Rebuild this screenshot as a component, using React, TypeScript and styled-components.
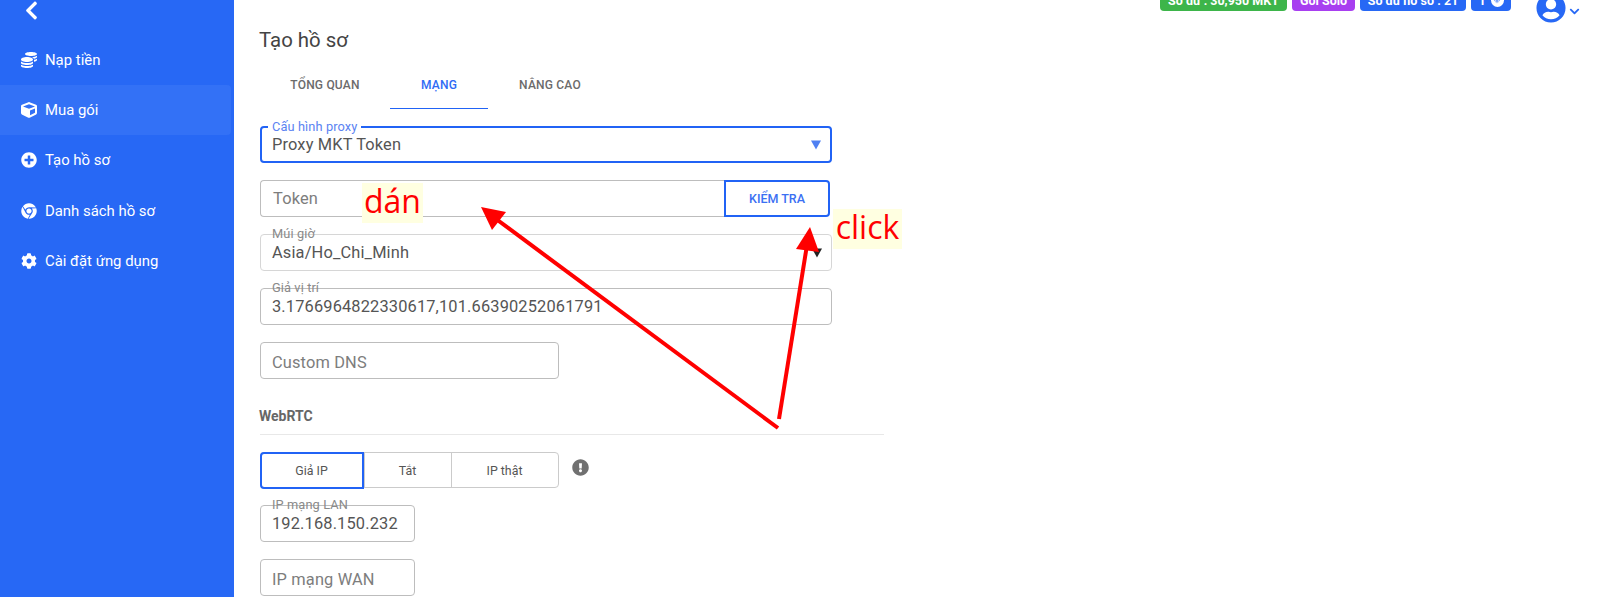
import React from "react";
import styled, { createGlobalStyle } from "styled-components";
import { FaChevronDown, FaChevronLeft, FaChrome, FaCoins, FaCog, FaCube, FaExclamationCircle, FaPlusCircle, FaUserCircle, FaGem } from "react-icons/fa";

const Global = createGlobalStyle`
  html, body { margin: 0; padding: 0; background: #fff; }
  body { font-family: Roboto, "Liberation Sans", sans-serif; color: #555; }
`;

const Page = styled.div`
  position: relative;
  display: grid;
  grid-template-columns: 234px 1fr;
  width: 1600px;
  height: 597px;
  overflow: hidden;
`;

const Sidebar = styled.aside`
  background: #2768f5;
  display: flex;
  flex-direction: column;
  height: 597px;
`;
const Back = styled.div`
  height: 20px;
  margin-bottom: 15px;
  padding-left: 21px;
  color: #fff;
  font-size: 21px;
  display: flex;
  align-items: center;
`;
const NavItem = styled.div<{ $active?: boolean }>`
  height: 50.2px;
  width: 231px;
  padding-left: 21px;
  box-sizing: border-box;
  display: flex;
  align-items: center;
  gap: 8px;
  color: #fff;
  font-size: 14.9px;
  border-radius: 0 4px 4px 0;
  background: ${(p) => (p.$active ? "#3371f6" : "transparent")};
  svg { width: 16px; height: 16px; flex: none; }
`;

const Main = styled.main`
  display: flex;
  flex-direction: column;
  margin-top: -12px;
`;
const TopBar = styled.div`
  display: flex;
  justify-content: flex-end;
  align-items: flex-start;
  height: 39px;
  padding-right: 20px;
  gap: 5px;
`;
const Badge = styled.div<{ $color: string; $w: number }>`
  background: ${(p) => p.$color};
  width: ${(p) => p.$w}px;
  height: 23px;
  padding-top: 1px;
  box-sizing: border-box;
  border-radius: 4px;
  color: #fff;
  font-size: 12.5px;
  font-weight: 700;
  display: flex;
  align-items: center;
  justify-content: center;
  gap: 5px;
  white-space: nowrap;
`;
const GemDot = styled.span`
  width: 13px;
  height: 13px;
  border-radius: 50%;
  background: #fff;
  color: #7aa2f7;
  display: inline-flex;
  align-items: center;
  justify-content: center;
  font-size: 8px;
`;
const UserMenu = styled.div`
  display: flex;
  align-items: flex-start;
  color: #2768f5;
  margin-left: 20px;
  padding-top: 5px;
  gap: 3px;
  .avatar { width: 30px; height: 30px; }
  .caret { width: 11px; height: 11px; margin-top: 13px; }
`;

const Content = styled.div`
  padding-left: 26px;
  width: 624px;
  display: flex;
  flex-direction: column;
`;
const Title = styled.h1`
  margin: 0 0 0 -1px;
  font-size: 20.4px;
  line-height: 26px;
  font-weight: 400;
  color: #444;
`;
const Tabs = styled.div`
  display: flex;
  margin-top: 8px;
  margin-bottom: 17px;
  height: 48px;
`;
const Tab = styled.div<{ $active?: boolean; $w: number }>`
  width: ${(p) => p.$w}px;
  display: flex;
  align-items: center;
  justify-content: center;
  font-size: 12px;
  font-weight: 500;
  letter-spacing: 0.2px;
  color: ${(p) => (p.$active ? "#2f6bf5" : "#6b6b6b")};
  border-bottom: ${(p) => (p.$active ? "1.5px solid #2163f5" : "1.5px solid transparent")};
  box-sizing: border-box;
`;

const Field = styled.div<{ $w?: number; $focus?: boolean; $faint?: boolean; $gap?: number }>`
  position: relative;
  box-sizing: border-box;
  width: ${(p) => p.$w ?? 572}px;
  height: 37px;
  margin-bottom: ${(p) => p.$gap ?? 17}px;
  border: ${(p) => (p.$focus ? "2px solid #2163f5" : `1px solid ${p.$faint ? "#d6d6d6" : "#bdbdbd"}`)};
  border-radius: 4px;
  padding-left: ${(p) => (p.$focus ? 10 : 11)}px;
  display: flex;
  align-items: center;
  font-size: 16.4px;
  color: #555;
  letter-spacing: 0.15px;
  background: #fff;
`;
const Floating = styled.span<{ $focus?: boolean }>`
  position: absolute;
  left: ${(p) => (p.$focus ? 6 : 11)}px;
  top: -8px;
  font-size: 12.8px;
  line-height: 14px;
  letter-spacing: 0.1px;
  color: ${(p) => (p.$focus ? "#5b83f2" : "#8a8a8a")};
  padding: 0 ${(p) => (p.$focus ? 4 : 0)}px;
  background: ${(p) => (p.$focus ? "#fff" : "transparent")};
`;
const Placeholder = styled.span<{ $low?: boolean }>`
  color: #7d7d7d;
  padding-top: ${(p) => (p.$low ? 3 : 0)}px;
`;
const Caret = styled.span<{ $color: string }>`
  position: absolute;
  right: 9px;
  top: 50%;
  transform: translateY(-50%);
  width: 0;
  height: 0;
  border-left: 5px solid transparent;
  border-right: 5px solid transparent;
  border-top: 9px solid ${(p) => p.$color};
`;
const TokenRow = styled.div`
  display: flex;
  width: 570px;
  margin-bottom: 17px;
`;
const TokenInput = styled(Field)`
  flex: 1;
  margin-bottom: 0;
  border-right: none;
  border-radius: 4px 0 0 4px;
  padding-left: 12px;
`;
const CheckButton = styled.div`
  box-sizing: border-box;
  width: 106px;
  height: 37px;
  border: 2px solid #2163f5;
  border-radius: 0 4px 4px 0;
  color: #3b70f3;
  font-size: 12.5px;
  font-weight: 500;
  display: flex;
  align-items: center;
  justify-content: center;
`;
const SectionTitle = styled.div`
  margin-top: 21px;
  height: 35px;
  width: 624px;
  border-bottom: 1px solid #e8e8e8;
  box-sizing: border-box;
  font-size: 14px;
  font-weight: 700;
  color: #666;
  line-height: 32px;
  text-indent: -1px;
`;
const ToggleRow = styled.div`
  display: flex;
  align-items: flex-start;
  gap: 13px;
  margin-top: 17px;
  margin-bottom: 17px;
  color: #707070;
  svg { width: 17px; height: 17px; margin-top: 7px; }
`;
const ToggleGroup = styled.div`
  display: flex;
  width: 299px;
  height: 36px;
  box-sizing: border-box;
  border: 1.5px solid #cbcbcb;
  border-radius: 4px;
`;
const Toggle = styled.div<{ $w: number; $on?: boolean }>`
  position: relative;
  width: ${(p) => p.$w}px;
  box-sizing: border-box;
  display: flex;
  align-items: center;
  justify-content: center;
  font-size: 12.4px;
  color: #555;
  border-left: ${(p) => (p.$on ? "none" : "1.5px solid #cbcbcb")};
  ${(p) => (p.$on ? "margin: -1.5px 0 -1.5px -1.5px; border: 2px solid #2163f5; border-radius: 4px 0 0 4px;" : "")}
`;

const Annotations = styled.svg`
  position: absolute;
  left: 0;
  top: 0;
  width: 1600px;
  height: 597px;
  pointer-events: none;
`;
const Note = styled.span<{ $x: number; $y: number; $w: number; $h: number }>`
  position: absolute;
  left: ${(p) => p.$x}px;
  top: ${(p) => p.$y}px;
  width: ${(p) => p.$w}px;
  height: ${(p) => p.$h}px;
  background: #ffffe1;
  color: #f00;
  font-family: "Open Sans", sans-serif;
  font-size: 32px;
  line-height: ${(p) => p.$h - 5}px;
  text-align: center;
`;

const nav = [
  { icon: <FaCoins />, label: "Nạp tiền" },
  { icon: <FaCube />, label: "Mua gói", active: true },
  { icon: <FaPlusCircle />, label: "Tạo hồ sơ" },
  { icon: <FaChrome />, label: "Danh sách hồ sơ" },
  { icon: <FaCog />, label: "Cài đặt ứng dụng" },
];

export default function App() {
  return (
    <Page>
      <Global />
      <Sidebar>
        <Back><FaChevronLeft /></Back>
        {nav.map((n) => (
          <NavItem key={n.label} $active={n.active}>{n.icon}{n.label}</NavItem>
        ))}
      </Sidebar>
      <Main>
        <TopBar>
          <Badge $color="#3db54a" $w={127}>Số dư : 30,950 MKT</Badge>
          <Badge $color="#a83ff0" $w={63}>Gói Solo</Badge>
          <Badge $color="#2768f5" $w={106}>Số dư hồ sơ : 21</Badge>
          <Badge $color="#2768f5" $w={40}>1<GemDot><FaGem /></GemDot></Badge>
          <UserMenu>
            <FaUserCircle className="avatar" />
            <FaChevronDown className="caret" />
          </UserMenu>
        </TopBar>
        <Content>
          <Title>Tạo hồ sơ</Title>
          <Tabs>
            <Tab $w={130}>TỔNG QUAN</Tab>
            <Tab $w={98} $active>MẠNG</Tab>
            <Tab $w={124}>NÂNG CAO</Tab>
          </Tabs>
          <Field $focus>
            <Floating $focus>Cấu hình proxy</Floating>
            Proxy MKT Token
            <Caret $color="#4f80f2" />
          </Field>
          <TokenRow>
            <TokenInput as="div"><Placeholder>Token</Placeholder></TokenInput>
            <CheckButton>KIỂM TRA</CheckButton>
          </TokenRow>
          <Field $faint>
            <Floating>Múi giờ</Floating>
            Asia/Ho_Chi_Minh
            <Caret $color="#222" />
          </Field>
          <Field>
            <Floating>Giả vị trí</Floating>
            3.1766964822330617,101.66390252061791
          </Field>
          <Field $w={299} $gap={0}><Placeholder $low>Custom DNS</Placeholder></Field>
          <SectionTitle>WebRTC</SectionTitle>
          <ToggleRow>
            <ToggleGroup>
              <Toggle $w={104} $on>Giả IP</Toggle>
              <Toggle $w={87}>Tắt</Toggle>
              <Toggle $w={107}>IP thật</Toggle>
            </ToggleGroup>
            <FaExclamationCircle />
          </ToggleRow>
          <Field $w={155}>
            <Floating>IP mạng LAN</Floating>
            192.168.150.232
          </Field>
          <Field $w={155}><Placeholder $low>IP mạng WAN</Placeholder></Field>
        </Content>
      </Main>
      <Note $x={362} $y={183} $w={61} $h={40}>dán</Note>
      <Note $x={833} $y={209} $w={69} $h={40}>click</Note>
      <Annotations viewBox="0 0 1600 597">
        <line x1="778" y1="428" x2="492" y2="216" stroke="#f00" strokeWidth="4" />
        <polygon points="481,207 506,212 492,230" fill="#f00" />
        <line x1="779" y1="419" x2="807" y2="245" stroke="#f00" strokeWidth="4" />
        <polygon points="810,227 796,249 819,252" fill="#f00" />
      </Annotations>
    </Page>
  );
}
